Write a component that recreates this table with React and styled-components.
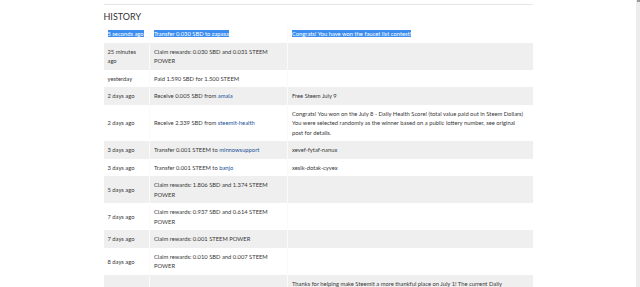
import React from 'react';
import styled, { createGlobalStyle } from 'styled-components';

const Global = createGlobalStyle`
  html, body { margin: 0; padding: 0; background: #fff; overflow: hidden; }
  body { font-family: Lato, "Open Sans", sans-serif; color: #333; }
`;

const Page = styled.div`
  display: flex;
  width: 640px;
  height: 287px;
  overflow: hidden;
`;

const Main = styled.main`
  flex: 1;
  display: flex;
  justify-content: center;
`;

const Wallet = styled.section`
  width: 429px;
  padding-top: 4px;
`;

const Rule = styled.hr`
  margin: 0;
  border: 0;
  border-top: 1px solid #e6e6e6;
`;

const Heading = styled.h4`
  margin: 6.2px 0 2.3px;
  font-size: 9px;
  line-height: 12px;
  font-weight: 400;
  color: #333;
`;

const Table = styled.table`
  width: 100%;
  border-collapse: collapse;
  table-layout: fixed;
  font-size: 5.8px;
  line-height: 9.5px;
  color: #383838;
`;

const Row = styled.tr`
  background: ${(p) => (p.$shaded ? '#efefef' : 'transparent')};
`;

const Cell = styled.td`
  padding: 4px;
  vertical-align: middle;
  white-space: nowrap;
  overflow: hidden;
  & + & { border-left: 1px solid #fafafa; }
`;

const Selected = styled.span`
  background: #3b8ef0;
  color: #fff;
`;

const Link = styled.a`
  color: #1a5099;
  text-decoration: none;
`;

const Scrollbar = styled.div`
  width: 4px;
  height: 287px;
  background: #ececec;
  display: flex;
  flex-direction: column;
`;

const Thumb = styled.div`
  height: 2px;
  margin-left: 1px;
  background: #9a9a9a;
`;

const rows = [
  { when: ['25 minutes', 'ago'], op: <>Claim rewards: 0.030 SBD and 0.031 STEEM<br />POWER</>, memo: null },
  { when: ['yesterday'], op: <>Paid 1.590 SBD for 1.500 STEEM</>, memo: null },
  { when: ['2 days ago'], op: <>Receive 0.005 SBD from <Link href="#">amala</Link></>, memo: 'Free Steem July 9' },
  {
    when: ['2 days ago'],
    op: <>Receive 2.339 SBD from <Link href="#">steemit-health</Link></>,
    memo: (
      <>
        Congrats! You won on the July 8 - Daily Health Score! (total value paid out in Steem Dollars)<br />
        You were selected randomly as the winner based on a public lottery number, see original<br />
        post for details.
      </>
    ),
  },
  { when: ['3 days ago'], op: <>Transfer 0.001 STEEM to <Link href="#">minnowsupport</Link></>, memo: 'xevef-fytaf-nanux' },
  { when: ['3 days ago'], op: <>Transfer 0.001 STEEM to <Link href="#">banjo</Link></>, memo: 'xesik-dotak-cyvex' },
  { when: ['5 days ago'], op: <>Claim rewards: 1.806 SBD and 1.374 STEEM<br />POWER</>, memo: null },
  { when: ['7 days ago'], op: <>Claim rewards: 0.937 SBD and 0.614 STEEM<br />POWER</>, memo: null },
  { when: ['7 days ago'], op: <>Claim rewards: 0.001 STEEM POWER</>, memo: null },
  { when: ['8 days ago'], op: <>Claim rewards: 0.010 SBD and 0.007 STEEM<br />POWER</>, memo: null },
  {
    when: ['9 days ago'],
    op: <>Receive 0.042 STEEM from <Link href="#">steemit-health</Link></>,
    memo: (
      <>
        Thanks for helping make Steemit a more thankful place on July 1! The current Daily<br />
        Thankful reward pool is shared among all thankful posts.
      </>
    ),
  },
];

export default function App() {
  return (
    <>
      <Global />
      <Page>
        <Main>
          <Wallet>
            <Rule />
            <Heading>HISTORY</Heading>
            <Table>
              <colgroup>
                <col style={{ width: 46 }} />
                <col style={{ width: 138 }} />
                <col style={{ width: 245 }} />
              </colgroup>
              <tbody>
                <Row>
                  <Cell><Selected>5 seconds ago</Selected></Cell>
                  <Cell><Selected>Transfer 0.030 SBD to zapasa</Selected></Cell>
                  <Cell><Selected>Congrats! You have won the faucet list contest!</Selected></Cell>
                </Row>
                {rows.map((r, i) => (
                  <Row key={i} $shaded={i % 2 === 0}>
                    <Cell>
                      {r.when.map((w, j) => (
                        <React.Fragment key={j}>
                          {j > 0 && <br />}
                          {w}
                        </React.Fragment>
                      ))}
                    </Cell>
                    <Cell>{r.op}</Cell>
                    <Cell>{r.memo}</Cell>
                  </Row>
                ))}
              </tbody>
            </Table>
          </Wallet>
        </Main>
        <Scrollbar>
          <Thumb />
        </Scrollbar>
      </Page>
    </>
  );
}
